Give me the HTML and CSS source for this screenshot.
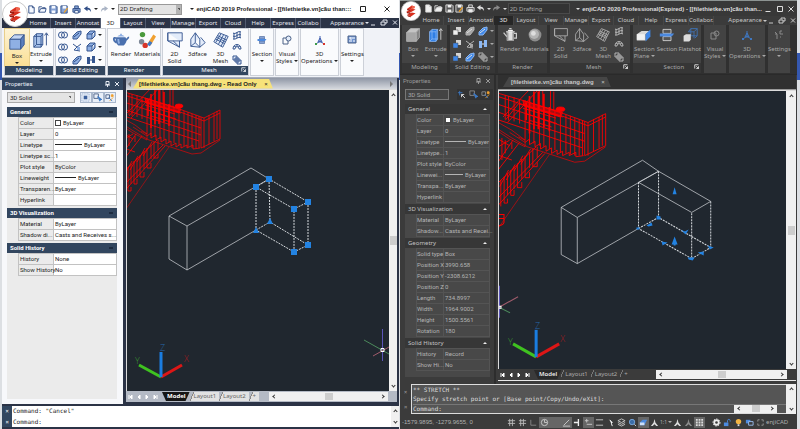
FILE: index.html
```
<!DOCTYPE html>
<html lang="en">
<head>
    <meta charset="UTF-8">
    <meta name="viewport" content="width=device-width, initial-scale=1.0">
    <title>enjiCAD 2019 / 2020</title>
    <link rel="stylesheet" href="styles.css">
</head>
<body>

    <!-- Shared icons -->
    <svg class="defs" aria-hidden="true">
        <symbol id="logo" viewBox="0 0 26 26">
            <circle cx="13" cy="13" r="12.5" fill="#fff" stroke="#c9c9c9"/>
            <path d="M8 10l6-4 4 1-6 4zM7 14l7-4 5 1-7 4zM8 18l6-3 5 1-6 4z" fill="#d8301f"/>
            <path d="M8 10l4 1v2l-4-1zM7 14l5 1v2l-4-1zM8 18l5 2v1l-4-1z" fill="#9c1a10"/>
            <path d="M14 6l4 1v2l-4 2z" fill="#f0644c"/>
        </symbol>
        <symbol id="new" viewBox="0 0 10 10"><path d="M2 1h4l2 2v6H2zM6 1v2h2" fill="var(--paper)" stroke="var(--line)"/></symbol>
        <symbol id="open" viewBox="0 0 10 10"><path d="M1 8V2h3l1 1h3v2" fill="none" stroke="var(--line)"/><path d="M1 8l2-4h6L8 8z" fill="var(--paper)" stroke="var(--line)"/></symbol>
        <symbol id="save" viewBox="0 0 10 10"><path d="M1 1h7l1 1v7H1z" fill="var(--mid)" stroke="var(--line)"/><path d="M3 1h4v3H3zM3 6h4v3H3z" fill="var(--paper)"/></symbol>
        <symbol id="saveas" viewBox="0 0 10 10"><path d="M1 1h7v8H1z" fill="var(--mid)" stroke="var(--line)"/><path d="M3 1h4v3H3z" fill="var(--paper)"/><path d="M4 8l4-5 1 1-4 5z" fill="#f0a020"/></symbol>
        <symbol id="print" viewBox="0 0 10 10"><path d="M3 1h4v3H3zM1 4h8v4H1z" fill="var(--mid)" stroke="var(--line)"/><path d="M3 6h4v3H3z" fill="var(--paper)" stroke="var(--line)"/></symbol>
        <symbol id="undo" viewBox="0 0 10 10"><path d="M1 4l4-3v2c3 0 4 2 4 5C8 6 7 5 5 5v2z" fill="var(--line)"/></symbol>
        <symbol id="redo" viewBox="0 0 10 10"><path d="M9 4L5 1v2C2 3 1 5 1 8c1-2 2-3 4-3v2z" fill="var(--off)"/></symbol>

        <symbol id="box" viewBox="0 0 20 20">
            <path d="M2 7l5-5h11l-4 5z" fill="var(--top)" stroke="var(--edge)"/>
            <path d="M14 7l4-5v11l-4 5z" fill="var(--side)" stroke="var(--edge)"/>
            <path d="M2 7h12v11H2z" fill="var(--front)" stroke="var(--edge)"/>
        </symbol>
        <symbol id="extrude" viewBox="0 0 20 20">
            <path d="M2 6l3-3h7v12l-2 3H2z" fill="var(--exfill)" stroke="var(--edge)"/>
            <path d="M2 6h8v12M10 6l2-3M5 3v12M2 18l3-3h7" fill="none" stroke="var(--edge)"/>
            <path d="M16 16V3M14 5l2-3 2 3" fill="none" stroke="var(--line)"/>
        </symbol>
        <symbol id="teapot" viewBox="0 0 20 20">
            <path d="M5 8c-4-2-4 3 0 5M15 10c2 0 2-3 4-3" fill="none" stroke="var(--pot)" stroke-width="2"/>
            <path d="M5 7h10c2 4 1 6-2 9H7c-3-3-4-5-2-9z" fill="var(--pot)"/>
            <path d="M6 6c2-2 6-2 8 0zM9 3h2v2H9z" fill="var(--pot2)"/>
            <path d="M7 9c0 2 0 3 1 5" stroke="var(--pot2)" stroke-width="2" fill="none"/>
        </symbol>
        <symbol id="kettle" viewBox="0 0 20 20">
            <path d="M6 6h9v11H6z" fill="#dedede"/><path d="M6 6h2v11H6zM13 6h2v11h-2z" fill="#9a9a9a"/>
            <path d="M5 6h11M8 4h5v1H8zM9 2h3" fill="#fff" stroke="#fff"/>
            <path d="M6 12L2 7M15 8h3v6h-3" fill="none" stroke="#ccc" stroke-width="1.500"/>
        </symbol>
        <symbol id="materials" viewBox="0 0 20 20">
            <circle cx="5" cy="4" r="3" fill="#4a9a3c"/><circle cx="4" cy="12" r="3" fill="#7d8897"/>
            <circle cx="8" cy="16" r="3" fill="#d8352a"/><path d="M10 15l7-11 3 2-6 10z" fill="#f0a030"/><path d="M10 15l3-4 3 2-3 4z" fill="#3c78c8"/>
        </symbol>
        <symbol id="ball" viewBox="0 0 20 20"><circle cx="10" cy="10" r="8" fill="#8d8d8d"/><circle cx="9" cy="9" r="6" fill="#b5b5b5"/><circle cx="8" cy="8" r="3" fill="#dedede"/></symbol>
        <symbol id="solid2d" viewBox="0 0 20 20"><path d="M2 2h16v9H2zM2 2v9l13 7V11M8 11l7 7" fill="var(--soft)" stroke="var(--edge)"/></symbol>
        <symbol id="face3d" viewBox="0 0 20 20"><path d="M2 9l5-7v11l-5 4zM7 2l5 7v9L7 13M2 17l10 1 6-5-5-6" fill="var(--soft)" stroke="var(--edge)"/></symbol>
        <symbol id="mesh3d" viewBox="0 0 20 20"><path d="M2 12L8 2l10 4-6 12zM5 7l10 5M7 15L13 4M4 9l10 5M6 5l10 5M4 13L10 3M10 17l6-12" fill="var(--soft)" stroke="var(--edge)"/></symbol>
        <symbol id="meshA" viewBox="0 0 10 10"><path d="M1 3c3 2 5-3 8-1M1 6c3 2 5-3 8-1M1 9c3 1 5-3 8-1M2 3v6M5 2v6M8 2v6" fill="none" stroke="var(--edge)"/></symbol>
        <symbol id="meshB" viewBox="0 0 10 10"><path d="M1 7c0-6 8-6 8 0M3 7c0-3 4-3 4 0M1 7h2M7 7h2M5 3v2M2 4l2 1M8 4L6 5" fill="none" stroke="var(--edge)"/></symbol>
        <symbol id="meshC" viewBox="0 0 10 10"><path d="M1 1h4v4H1zM3 3h4v4H3zM5 5h4v4H5z" fill="var(--soft)" stroke="var(--edge)"/></symbol>

        <symbol id="union" viewBox="0 0 10 10"><circle cx="3.500" cy="5" r="3" fill="none" stroke="var(--edge)"/><circle cx="6.500" cy="5" r="3" fill="none" stroke="var(--edge)"/></symbol>
        <symbol id="pair" viewBox="0 0 10 10"><path d="M4 1h5v5H4z" fill="#d5d5d5"/><path d="M1 4h5v5H1z" fill="var(--pairfill, #efefef)" stroke="#444" stroke-width=".5"/></symbol>
        <symbol id="slab" viewBox="0 0 10 10"><path d="M1 6l4-4 4-1v3L5 9H1z" fill="var(--front)" stroke="var(--edge)"/><path d="M2 7l5-4" stroke="var(--line)"/></symbol>
        <symbol id="cubelet" viewBox="0 0 10 10"><path d="M1 4h5v5H1zM1 4l3-3h5L6 4M9 1v5L6 9" fill="var(--front)" stroke="var(--edge)"/></symbol>
        <symbol id="slice" viewBox="0 0 10 10"><path d="M1 2l4 3-3 3 6 1M5 5l4-3" fill="none" stroke="var(--edge)"/><path d="M5 5h3v3H5z" fill="var(--front)"/></symbol>
        <symbol id="twin" viewBox="0 0 10 10"><path d="M1 2h3v7H1zM6 1h3v7H6z" fill="var(--edge)"/><path d="M4 5h2" stroke="var(--line)"/></symbol>

        <symbol id="section" viewBox="0 0 20 20"><path d="M5 3h10v5H5zM5 12h10v5H5z" fill="var(--mid)" stroke="var(--line)"/><path d="M1 8h18l-3 4H1z" fill="#4c8ae0"/></symbol>
        <symbol id="plane" viewBox="0 0 20 20"><path d="M1 9l6-4h10l-5 4v8H1z" fill="#d8d8d8"/><path d="M12 9l6-6v9l-6 6z" fill="#3f87e8"/><path d="M1 9h10v7H1z" fill="#f1f1f1"/></symbol>
        <symbol id="flatshot" viewBox="0 0 20 20"><path d="M8 6l3-4h8v9l-3 3M8 6h7v8M15 6l4-4M11 2v9h8" fill="none" stroke="#3f77c0"/><path d="M2 11l3-2h6v7l-2 2H2z" fill="#dcdcdc"/></symbol>
        <symbol id="visual" viewBox="0 0 10 10"><path d="M1 3h5v6H1z" fill="none" stroke="var(--sm)"/><circle cx="6.500" cy="3.500" r="2.500" fill="var(--soft)" stroke="var(--sm)"/></symbol>
        <symbol id="ops" viewBox="0 0 10 10"><path d="M5 1v5L1 9M5 6l4 3M3 7l2-4 2 4z" fill="none" stroke="var(--ops)"/><path d="M0 8h2v2H0z" fill="var(--opsgreen)"/><path d="M8 8h2v2H8z" fill="var(--opsred)"/></symbol>
        <symbol id="settings" viewBox="0 0 10 10"><path d="M1 1h8v7H1z" fill="#6f93d0" stroke="var(--sm)"/><path d="M2 3h2M5 3h3M2 6h3M6 6h2M4 2v3" stroke="#fff"/></symbol>
        <symbol id="tune" viewBox="0 0 10 10"><path d="M1 2l2 2v5M1 4h2M6 1h2M6 1v3h3M6 7h1" fill="none" stroke="#8a8a8a"/></symbol>
        <symbol id="pick" viewBox="0 0 10 10"><path d="M1 1h5v5H1z" fill="none" stroke="var(--sm)"/><path d="M5 4l4 3-2 0 1 2" fill="none" stroke="#3b79c6" stroke-width="1.500"/></symbol>
        <symbol id="plus" viewBox="0 0 10 10"><path d="M1 1h8v8H1z" fill="none" stroke="#8aa4cc" stroke-dasharray="1 1"/><path d="M3 3h4v4H3z" fill="#3b5f9c"/></symbol>
        <symbol id="addpick" viewBox="0 0 10 10"><path d="M3 1v5M1 3h5" stroke="#3b79c6"/><path d="M5 5l4 4M5 5h3M5 5v3" stroke="#ddd"/></symbol>
        <symbol id="quick" viewBox="0 0 10 10"><path d="M1 2h4v4H1z" fill="none" stroke="var(--sm)"/><path d="M5 9L9 5M7 2h2v2H7z" fill="#f0a030" stroke="#f0a030"/><path d="M4 5l4 4" stroke="#3b79c6"/></symbol>
        <symbol id="launch" viewBox="0 0 8 8"><path d="M1 6V1h5M3 3l3 3M6 3v3H3" fill="none" stroke="#fff"/></symbol>

        <!-- Status bar icons -->
        <symbol id="grid" viewBox="0 0 10 10"><path d="M3 1v8M6 1v8M1 3h8M1 6h8" stroke="#bbb" fill="none"/></symbol>
        <symbol id="ortho" viewBox="0 0 10 10"><path d="M2 2v6h6" stroke="#888" fill="none"/></symbol>
        <symbol id="track" viewBox="0 0 10 10"><path d="M3 1v4M1 3h4M3 7h6" stroke="#ccc" fill="none"/></symbol>
        <symbol id="polar" viewBox="0 0 10 10"><circle cx="5" cy="5" r="3.500" fill="none" stroke="#ccc"/><path d="M5 2v3h3" stroke="#ccc" fill="none"/></symbol>
        <symbol id="slash" viewBox="0 0 10 10"><path d="M1 9h8M2 8l6-6" stroke="#ccc"/></symbol>
        <symbol id="cross" viewBox="0 0 10 10"><path d="M6 1v8M1 5h5" stroke="#eee" stroke-width="1.500"/></symbol>
        <symbol id="lines" viewBox="0 0 10 10"><path d="M1 2h8M1 8h8" stroke="#ccc"/></symbol>
        <symbol id="arrow" viewBox="0 0 10 10"><path d="M4 2l3 3-1 1 1 3" fill="#fff" stroke="#fff"/></symbol>
        <symbol id="layers" viewBox="0 0 10 10"><path d="M1 3l4-2 4 2-4 2zM1 5l4 2 4-2M1 7l4 2 4-2" fill="none" stroke="#ccc"/></symbol>
        <symbol id="zoomer" viewBox="0 0 10 10"><circle cx="4.500" cy="4.500" r="3" fill="#3c6ea8" stroke="#7aa8dc"/><path d="M7 7l2 2" stroke="#ddd"/></symbol>
        <symbol id="sheet" viewBox="0 0 10 10"><path d="M1 5l3-3h5L6 8H1z" fill="#4c8ae0"/><path d="M1 5h5v3H1z" fill="#cfe0f8"/></symbol>
        <symbol id="person" viewBox="0 0 10 10"><path d="M5 1l1 4 3 4H7L5 7 3 9H1l3-4z" fill="#ddd"/></symbol>
        <symbol id="checker" viewBox="0 0 10 10"><path d="M1 2h8M1 5h8M1 8h8" stroke="#ddd" stroke-dasharray="2 1" stroke-width="2"/></symbol>
        <symbol id="gear" viewBox="0 0 10 10"><circle cx="5" cy="5" r="2.500" fill="none" stroke="#eee" stroke-width="2"/><circle cx="5" cy="5" r="4" fill="none" stroke="#eee" stroke-dasharray="1.500 1.500"/></symbol>
        <symbol id="lock" viewBox="0 0 10 10"><path d="M1 5h5v4H1z" fill="#4c8ae0"/><path d="M5 5V3c0-2 3-2 3 0v1" fill="none" stroke="#4c8ae0"/></symbol>
        <symbol id="bulb" viewBox="0 0 10 10"><circle cx="5" cy="4" r="3" fill="#f5b544"/><path d="M4 7h2v2H4z" fill="#ddd"/></symbol>
        <symbol id="screens" viewBox="0 0 10 10"><path d="M1 2h5v4H1z" fill="#4c8ae0"/><path d="M4 4h5v4H4z" fill="#3b3b3b" stroke="#9cc0f0"/></symbol>
        <symbol id="full" viewBox="0 0 10 10"><path d="M2 4V2h2M6 2h2v2M8 6v2H6M4 8H2V6" fill="none" stroke="#999"/></symbol>

        <!-- Staircase wireframe used in both drawings -->
        <symbol id="stairs" viewBox="116 84 110 140" overflow="visible">
            <g fill="none" stroke="#f00" stroke-width=".8">
                <path d="M120 91l24 7 37 12 22 8 16-8v29l-19 9M120 94l25 8 37 11 21 8 16-8M120 101l80 27M120 108l25 9 38 12 17 6M120 115l78 26"/>
                <path d="M128 93v22M131 94v22M136 95v22M141 97v22M146 98v36M150 100v36M154 101v36M159 103v36M163 104v36M168 106v36M173 107v36M178 109v36M183 111v35M187 112v35M191 114v34M195 115v33M198 116v32M200 117v31M203 118v30M208 115v29M213 113v28M216 111v28"/>
                <path d="M146 136l4-3v5l5-3v5l5-3v5l5-3v5l5-3v5l5-3v4l5-3v4l6-3v3l6-3v4l7-1"/>
                <path d="M159 86v18M162 86v18M169 88v19M172 90v17"/>
                <path d="M147 100v16M150 94v34M154 90v34M158 90v34M163 92v30M168 104v22" stroke-width="1.500"/>
                <path d="M126 113l28-29M130 118l32-34M128 116l12-15M140 101l40 12M144 105l30 9M147 110l28 9M150 116l20 6"/>
                <path d="M144 98l36 11-2 4-33-10z" fill="#f00" fill-opacity=".6"/>
                <ellipse cx="178" cy="106" rx="4" ry="2" fill="#f00"/>
                <path d="M120 117l14 8 12 9v6l-14-7-12-8M120 123l14 9 14 8 43 14 9-1 19-13M146 134l-6-3M132 127l14 9" stroke-width=".6"/>
                <path d="M120 132l12 7M120 147l14 5M120 141l12-7M120 156l15-22M120 163l21-27M121 135v20M125 132v20M128 134v12M134 136v6"/>
                <path d="M118 176l38-36M118 190l44-45M118 197l46-51"/>
                <path d="M121 173v20M124 170v24M127 167v24h3v-4M130 164v20M133 161v23h3v-5M136 158v20M139 155v22h4v-5M143 151v18M146 148v20h4v-5M150 145v14M153 142v16h4v-4M157 140v10"/>
                <path d="M123 176l8-15M129 170l8-14M136 162l8-14M142 156l9-14"/>
                <path d="M118 219l50-72" stroke-width=".5"/>
            </g>
        </symbol>
    </svg>

    <!-- enjiCAD 2019 -->
    <main class="window light">
        <header class="titlebar">
            <svg class="logo"><use href="#logo"/></svg>
            <div class="quick">
                <svg><use href="#new"/></svg>
                <svg><use href="#open"/></svg>
                <svg><use href="#save"/></svg>
                <svg><use href="#saveas"/></svg>
                <svg><use href="#print"/></svg>
                <svg><use href="#undo"/></svg>
                <span class="caret"></span>
                <svg><use href="#redo"/></svg>
                <span class="caret"></span>
            </div>
            <select class="workspace" aria-label="Workspace"><option>2D Drafting</option></select>
            <h1><span class="caret"></span> enjiCAD 2019 Professional - [[filethietke.vn]cầu than:::</h1>
            <button class="winbtn" aria-label="Maximize"><svg viewBox="0 0 8 8"><path d="M1.500 1.500h5v5h-5z"/></svg></button>
            <button class="winbtn" aria-label="Close"><svg viewBox="0 0 8 8"><path d="M1.500 1.500l5 5M6.500 1.500l-5 5"/></svg></button>
        </header>
        <nav class="tabs">
            <a href="#">Home</a><a href="#">Insert</a><a href="#">Annotat</a><a href="#" class="active">3D</a><a href="#">Layout</a><a href="#">View</a><a href="#">Manage</a><a href="#">Export</a><a href="#">Cloud</a><a href="#">Help</a><a href="#">Express</a><a href="#">Collabo</a>
            <button class="appearance">Appearance <span class="caret"></span></button>
            <svg class="mdi" viewBox="0 0 30 8"><path d="M2 6.500h4M12 3.500h4v3h-4zM14 3V1.500h4v3h-2M24 2l4 4M28 2l-4 4"/></svg>
        </nav>
        <div class="ribbon">
            <section class="panel modeling">
                <div class="tools">
                    <button class="tool on"><svg><use href="#box"/></svg>Box<span class="caret"></span></button>
                    <button class="tool"><svg><use href="#extrude"/></svg>Extrude<span class="caret"></span></button>
                </div>
                <h2>Modeling</h2>
            </section>
            <section class="panel editing">
                <div class="icons">
                    <svg><use href="#union"/></svg><svg><use href="#slab"/></svg><svg><use href="#cubelet"/></svg><span class="caret"></span>
                    <svg><use href="#union"/></svg><svg><use href="#slice"/></svg><svg><use href="#cubelet"/></svg><span class="caret"></span>
                    <svg><use href="#union"/></svg><svg><use href="#slab"/></svg><svg><use href="#twin"/></svg><span class="caret"></span>
                </div>
                <h2>Solid Editing</h2>
            </section>
            <section class="panel render">
                <div class="tools">
                    <button class="tool"><svg><use href="#teapot"/></svg>Render</button>
                    <button class="tool"><svg><use href="#materials"/></svg>Materials</button>
                </div>
                <h2>Render</h2>
            </section>
            <section class="panel mesh">
                <div class="tools">
                    <button class="tool"><svg><use href="#solid2d"/></svg>2D<br>Solid</button>
                    <button class="tool"><svg><use href="#face3d"/></svg>3dface</button>
                    <button class="tool"><svg><use href="#mesh3d"/></svg>3D<br>Mesh</button>
                    <div class="stack"><svg><use href="#meshA"/></svg><svg><use href="#meshB"/></svg><svg><use href="#meshC"/></svg></div>
                </div>
                <h2>Mesh <svg class="launch"><use href="#launch"/></svg></h2>
            </section>
            <section class="panel narrow"><button class="tool small"><svg><use href="#section"/></svg>Section<span class="caret"></span></button></section>
            <section class="panel narrow"><button class="tool small"><svg><use href="#visual"/></svg>Visual<br>Styles <span class="caret in"></span></button></section>
            <section class="panel wide"><button class="tool small"><svg><use href="#ops"/></svg>3D<br>Operations <span class="caret in"></span></button></section>
            <section class="panel narrow"><button class="tool small"><svg><use href="#settings"/></svg>Settings<span class="caret"></span></button></section>
        </div>

        <div class="workarea">
            <aside class="properties">
                <h2>Properties <span class="pins"><svg viewBox="0 0 16 8"><path d="M2 1.500h3v3H2zM1 5h5M3.500 5v2M11 2l4 4M15 2l-4 4"/></svg></span></h2>
                <div class="picker">
                    <select aria-label="Object"><option>3D Solid</option></select>
                    <button aria-label="Toggle pick"><svg><use href="#plus"/></svg></button>
                    <button aria-label="Select objects"><svg><use href="#pick"/></svg></button>
                    <button aria-label="Quick select"><svg><use href="#quick"/></svg></button>
                </div>
                <div class="sheet">
                    <h3>General</h3>
                    <table>
                        <tr><th>Color</th><td><span class="swatch"></span>ByLayer</td></tr>
                        <tr><th>Layer</th><td>0</td></tr>
                        <tr><th>Linetype</th><td><span class="rule long"></span>ByLayer</td></tr>
                        <tr><th>Linetype sc...</th><td>1</td></tr>
                        <tr class="locked"><th>Plot style</th><td>ByColor</td></tr>
                        <tr><th>Lineweight</th><td><span class="rule"></span>ByLayer</td></tr>
                        <tr><th>Transparen...</th><td>ByLayer</td></tr>
                        <tr><th>Hyperlink</th><td></td></tr>
                    </table>
                    <h3>3D Visualization</h3>
                    <table>
                        <tr><th>Material</th><td>ByLayer</td></tr>
                        <tr><th>Shadow di...</th><td>Casts and Receives s...</td></tr>
                    </table>
                    <h3>Solid History</h3>
                    <table>
                        <tr><th>History</th><td>None</td></tr>
                        <tr><th>Show History</th><td>No</td></tr>
                    </table>
                </div>
            </aside>
            <section class="document">
                <div class="files"><span class="prev"></span><a href="#">[filethietke.vn]cầu thang.dwg - Read Only <b>×</b></a><span class="next"></span></div>
                <div class="view">
                    <svg class="canvas" viewBox="126 90 262 301" preserveAspectRatio="xMinYMin slice">
                        <use href="#stairs" x="116" y="84" width="110" height="140"/>
                        <g class="wire">
                            <path d="M168 216l18 10v44l-18-11zM168 216l82-48 18 11-82 47M186 270l69-40"/>
                            <path class="dash" d="M255 187l13-8 39 23-14 7zM255 187v43l38 22v-43M307 202v43l-14 7M268 179l1 43 38 23M255 230l14-8"/>
                        </g>
                        <path class="grips" d="M252 184h6v6h-6zM265 176h6v6h-6zM290 206h6v6h-6zM304 199h6v6h-6zM290 249h6v6h-6zM304 242h6v6h-6zM252 233l3-6 3 6zM266 224l3-6 3 6z"/>
                        <g class="ucs">
                            <path class="x" d="M160 377l21-12"/><path class="y" d="M160 377l-22-12"/><path class="z" d="M160 377v-25"/>
                            <text class="x" x="183" y="362">X</text><text class="y" x="134" y="364">Y</text><text class="z" x="159" y="351">Z</text>
                        </g>
                        <g class="cursor">
                            <path stroke="#5b55b8" d="M381.500 329v32"/><path stroke="#4c8a5c" d="M363 340l25 14"/><path stroke="#a05c6c" d="M372 356l16-9"/>
                            <path stroke="#fff" d="M380 348.500h3v3h-3z"/>
                        </g>
                    </svg>
                    <div class="vscroll"><i class="up"></i><span></span><i class="down"></i></div>
                </div>
                <div class="sheets">
                    <svg class="steps" viewBox="0 0 36 8"><path d="M3 2v4M6 2v4l-2-2zM14 2v4l-2-2zM20 2v4l2-2zM28 2v4l2-2zM31 2v4"/></svg>
                    <a href="#" class="active">Model</a><a href="#">Layout1</a><a href="#">Layout2</a><a href="#">+</a>
                    <div class="hscroll"><i class="left"></i><span></span><i class="right"></i></div>
                </div>
            </section>
        </div>

        <footer class="command">
            <div class="grip"><span>×</span><span>¤</span></div>
            <div class="console">
                <p>Command: "Cancel"</p>
                <label>Command: <input type="text" aria-label="Command"></label>
            </div>
            <div class="vscroll"><i class="up"></i><i class="down"></i></div>
        </footer>
    </main>

    <!-- enjiCAD 2020 -->
    <main class="window dark">
        <header class="titlebar">
            <svg class="logo"><use href="#logo"/></svg>
            <div class="quick">
                <svg><use href="#new"/></svg>
                <svg><use href="#open"/></svg>
                <svg><use href="#save"/></svg>
                <svg><use href="#saveas"/></svg>
                <svg><use href="#print"/></svg>
                <svg><use href="#undo"/></svg>
                <span class="caret"></span>
                <svg><use href="#redo"/></svg>
                <span class="caret"></span>
            </div>
            <select class="workspace" aria-label="Workspace"><option>2D Drafting</option></select>
            <h1><span class="caret"></span> enjiCAD 2020 Professional(Expired) - [[filethietke.vn]cầu than...</h1>
            <button class="winbtn" aria-label="Minimize"><svg viewBox="0 0 8 8"><path d="M1.500 6.500h5"/></svg></button>
            <button class="winbtn" aria-label="Maximize"><svg viewBox="0 0 8 8"><path d="M1.500 1.500h5v5h-5z"/></svg></button>
            <button class="winbtn" aria-label="Close"><svg viewBox="0 0 8 8"><path d="M1.500 1.500l5 5M6.500 1.500l-5 5"/></svg></button>
        </header>
        <nav class="tabs">
            <a href="#">Home</a><a href="#">Insert</a><a href="#">Annotati</a><a href="#" class="active">3D</a><a href="#">Layout</a><a href="#">View</a><a href="#">Manage</a><a href="#">Export</a><a href="#">Cloud</a><a href="#">Help</a><a href="#">Express</a><a href="#">Collabor.</a>
            <button class="appearance">Appearance <span class="caret"></span></button>
            <svg class="mdi" viewBox="0 0 30 8"><path d="M2 6.500h4M12 3.500h4v3h-4zM14 3V1.500h4v3h-2M24 2l4 4M28 2l-4 4"/></svg>
        </nav>
        <div class="ribbon">
            <section class="panel modeling">
                <div class="tools">
                    <button class="tool"><svg><use href="#box"/></svg>Box<span class="caret"></span></button>
                    <button class="tool"><svg class="blue"><use href="#extrude"/></svg>Extrude<span class="caret"></span></button>
                </div>
                <h2>Modeling</h2>
            </section>
            <section class="panel editing">
                <div class="icons">
                    <svg><use href="#pair"/></svg><svg><use href="#slab"/></svg><svg class="blue"><use href="#slab"/></svg><span class="caret"></span>
                    <svg class="blue"><use href="#pair"/></svg><svg><use href="#slice"/></svg><svg class="blue"><use href="#twin"/></svg><span class="caret"></span>
                    <svg class="blue"><use href="#pair"/></svg><svg class="blue"><use href="#slab"/></svg><svg><use href="#meshC"/></svg><span class="caret"></span>
                </div>
                <h2>Solid Editing</h2>
            </section>
            <section class="panel render">
                <div class="tools">
                    <button class="tool"><svg><use href="#kettle"/></svg>Render</button>
                    <button class="tool"><svg><use href="#ball"/></svg>Materials</button>
                </div>
                <h2>Render</h2>
            </section>
            <section class="panel mesh">
                <div class="tools">
                    <button class="tool"><svg><use href="#solid2d"/></svg>2D<br>Solid</button>
                    <button class="tool"><svg><use href="#face3d"/></svg>3dface</button>
                    <button class="tool"><svg><use href="#mesh3d"/></svg>3D<br>Mesh</button>
                    <div class="stack"><svg><use href="#meshA"/></svg><svg><use href="#meshB"/></svg><svg><use href="#meshC"/></svg></div>
                </div>
                <h2>Mesh <svg class="launch"><use href="#launch"/></svg></h2>
            </section>
            <section class="panel sections">
                <div class="tools">
                    <button class="tool"><svg><use href="#plane"/></svg>Section<br>Plane <span class="caret in"></span></button>
                    <button class="tool"><svg><use href="#section"/></svg>Section</button>
                    <button class="tool"><svg><use href="#flatshot"/></svg>Flatshot</button>
                </div>
                <h2>Section <svg class="launch"><use href="#launch"/></svg></h2>
            </section>
            <section class="panel narrow"><button class="tool small"><svg><use href="#visual"/></svg>Visual<br>Styles <span class="caret in"></span></button></section>
            <section class="panel wide"><button class="tool small"><svg><use href="#ops"/></svg>3D<br>Operations <span class="caret in"></span></button></section>
            <section class="panel narrow"><button class="tool small"><svg><use href="#tune"/></svg>Settings<span class="caret"></span></button></section>
        </div>

        <div class="workarea">
            <aside class="properties">
                <h2>Properties <span class="pins"><svg viewBox="0 0 16 8"><path d="M2 1.500h3v3H2zM1 5h5M3.500 5v2M11 2l4 4M15 2l-4 4"/></svg></span></h2>
                <div class="picker">
                    <select aria-label="Object"><option>3D Solid</option></select>
                    <button aria-label="Toggle pick"><svg><use href="#addpick"/></svg></button>
                    <button aria-label="Select objects"><svg><use href="#pick"/></svg></button>
                    <button aria-label="Quick select"><svg><use href="#quick"/></svg></button>
                </div>
                <div class="sheet">
                    <h3>General</h3>
                    <table>
                        <tr><th>Color</th><td><span class="swatch"></span>ByLayer</td></tr>
                        <tr><th>Layer</th><td>0</td></tr>
                        <tr><th>Linetype</th><td><span class="rule"></span>ByLayer</td></tr>
                        <tr><th>Linetype...</th><td>1</td></tr>
                        <tr><th>Plot style</th><td>ByColor</td></tr>
                        <tr><th>Linewei...</th><td><span class="rule short"></span>ByLayer</td></tr>
                        <tr><th>Transpa...</th><td>ByLayer</td></tr>
                        <tr><th>Hyperlink</th><td></td></tr>
                    </table>
                    <h3>3D Visualization</h3>
                    <table>
                        <tr><th>Material</th><td>ByLayer</td></tr>
                        <tr><th>Shadow...</th><td>Casts and Recei...</td></tr>
                    </table>
                    <h3>Geometry</h3>
                    <table>
                        <tr><th>Solid type</th><td>Box</td></tr>
                        <tr><th>Position X</th><td>3990.658</td></tr>
                        <tr><th>Position Y</th><td>-2308.6212</td></tr>
                        <tr><th>Position Z</th><td>0</td></tr>
                        <tr><th>Length</th><td>734.8997</td></tr>
                        <tr><th>Width</th><td>1964.9002</td></tr>
                        <tr><th>Height</th><td>1500.5561</td></tr>
                        <tr><th>Rotation</th><td>180</td></tr>
                    </table>
                    <h3>Solid History</h3>
                    <table>
                        <tr><th>History</th><td>Record</td></tr>
                        <tr><th>Show Hi...</th><td>No</td></tr>
                    </table>
                </div>
            </aside>
            <section class="document">
                <div class="files"><a href="#">[filethietke.vn]cầu thang.dwg <b>×</b></a></div>
                <div class="view">
                    <svg class="canvas" viewBox="500 90 286 281" preserveAspectRatio="xMinYMin slice">
                        <use href="#stairs" x="493" y="84" width="121" height="154"/>
                        <path fill="none" stroke="#f00" d="M500 213h5v8c-1 3-3 3-5 3M500 217h5"/>
                        <g class="wire">
                            <path d="M562 206l16 10v46l-16-9zM562 206l81-47 16 11-81 46M578 262l61-35M639 181l20-11 52 30-19 11-53-30"/>
                            <path class="dash" d="M639 181v46l53 30v-46M711 200v46l-19 11M659 170v46l52 30M639 227l20-11"/>
                        </g>
                        <path class="grips" d="M675 186l2 7h-4zM674 243h-2l3-8 3 8h-2v1h-2zM647 224l5-3 1 3-4 1zM657 214l4 1v3h-4zM681 228l4 2 4-2-3 5zM637 226h3v2h-3zM662 240l6 1-5 3zM688 256h7l-2 3-4-1zM698 251l6-1v4zM708 244l6 2-4 2z"/>
                        <g class="ucs">
                            <path class="x" d="M537 355l23-13"/><path class="y" d="M537 355l-23-13"/><path class="z" d="M537 355v-27"/>
                            <text class="x" x="561" y="340">X</text><text class="y" x="509" y="343">Y</text><text class="z" x="536" y="327">Z</text>
                        </g>
                        <g class="cursor">
                            <path stroke="#5b55b8" d="M500.500 284v32"/><path stroke="#4c8a5c" d="M501 306l10 5"/><path stroke="#a05c6c" d="M501 305l18-10"/>
                            <path stroke="#fff" d="M500 304.500h2v2h-2z"/>
                        </g>
                    </svg>
                    <div class="vscroll"><i class="up"></i><span></span><i class="down"></i></div>
                </div>
                <div class="sheets">
                    <svg class="steps" viewBox="0 0 36 8"><path d="M3 2v4M6 2v4l-2-2zM14 2v4l-2-2zM20 2v4l2-2zM28 2v4l2-2zM31 2v4"/></svg>
                    <a href="#" class="active">Model</a><a href="#">Layout1</a><a href="#">Layout2</a><a href="#">+</a>
                    <div class="hscroll"><i class="left"></i><span></span><i class="right"></i></div>
                </div>
            </section>
        </div>

        <footer class="command">
            <div class="grip"><span>×</span><span>¤</span></div>
            <div class="console">
                <p>** STRETCH **</p>
                <p>Specify stretch point or [Base point/Copy/Undo/eXit]:</p>
                <div class="entry">
                    <label>Command: <input type="text" aria-label="Command"></label>
                    <div class="hscroll"><i class="left"></i><span></span><i class="right"></i></div>
                </div>
            </div>
            <div class="vscroll"><i class="up"></i><i class="down"></i></div>
        </footer>
        <div class="status">
            <span class="coords">-1579.9895, -1279.9655, 0</span>
            <svg><use href="#grid"/></svg><svg><use href="#grid"/></svg><svg><use href="#ortho"/></svg><svg class="on"><use href="#polar"/></svg><svg class="on"></svg><svg class="on"><use href="#slash"/></svg><svg><use href="#cross"/></svg><svg class="on"><use href="#track"/></svg><svg><use href="#lines"/></svg>
            <svg><use href="#arrow"/></svg><svg><use href="#layers"/></svg><svg><use href="#zoomer"/></svg><svg class="on"><use href="#sheet"/></svg><svg><use href="#person"/></svg>
            <span class="scale">1:1 <span class="caret in"></span></span>
            <svg><use href="#person"/></svg><svg class="off"><use href="#person"/></svg><svg class="on"><use href="#checker"/></svg>
            <svg class="gap"><use href="#gear"/></svg><svg><use href="#lock"/></svg><svg><use href="#bulb"/></svg><svg><use href="#screens"/></svg><svg><use href="#full"/></svg>
            <span class="brand">enjiCAD</span>
        </div>
    </main>

</body>
</html>
```
FILE: styles.css
```
* {
    box-sizing: border-box;
}
body {
    margin: 0;
    padding: 0 3px 0 2px;
    min-height: 100vh;
    display: grid;
    grid-template-columns: 1fr 1fr;
    gap: 1px;
    font: 6px/8px "Noto Sans", sans-serif;
    background: linear-gradient(#dcdfe3 53px, #3558b0 53px, #3558b0 80px, #dcdfe3 80px);
}
h1, h2, h3, p {
    margin: 0;
    font-size: 6px;
    line-height: 8px;
    font-weight: normal;
}
a {
    color: inherit;
    text-decoration: none;
}
button, select, input {
    font: inherit;
    color: inherit;
    margin: 0;
    padding: 0;
    border: 0;
    border-radius: 0;
    background: none;
    appearance: none;
    min-width: 0;
}
svg {
    display: block;
    flex: none;
}
.defs {
    position: absolute;
    width: 0;
    height: 0;
}
.window {
    display: flex;
    flex-direction: column;
    min-width: 0;
    height: 100vh;
    overflow: hidden;
    position: relative;
}
.light {
    --line: #2f4d86;
    --paper: #f6f9ff;
    --mid: #86a2d4;
    --off: #a9b3c4;
    --top: #c3d5f3;
    --side: #5c7fbd;
    --front: #8fb0e4;
    --exfill: #a9c3ec;
    --edge: #34558f;
    --soft: #e3ecfa;
    --pot: #4a70ae;
    --pot2: #8fb0e4;
    --sm: #4c6288;
    --ops: #3d5cae;
    --opsred: #d8352a;
    --opsgreen: #3a9a48;
    background: #fff;
    color: #222;
}
.dark {
    --line: #e0e0e0;
    --paper: #f0f0f0;
    --mid: #555;
    --off: #8a8a8a;
    --top: #c4c4c4;
    --side: #838383;
    --front: #a6a6a6;
    --exfill: #2f7fe6;
    --edge: #b4b4b4;
    --soft: none;
    --pot: #b8b8b8;
    --pot2: #ececec;
    --sm: #8a8a8a;
    --ops: #3f77c0;
    --opsred: #3f77c0;
    --opsgreen: #3f77c0;
    background: #383838;
    color: #a8a8a8;
}
.dark .blue {
    --front: #3f87e8;
    --edge: #8cb8f4;
    --pairfill: #3f87e8;
}
.caret {
    display: block;
    width: 0;
    height: 0;
    border: 2px solid transparent;
    border-top-color: currentColor;
    border-bottom: 0;
}
.caret.in {
    display: inline-block;
    vertical-align: 1px;
}

/* Title bar */
.titlebar {
    display: flex;
    align-items: center;
    height: 18px;
    padding-left: 25px;
}
.dark .titlebar {
    height: 16px;
    padding-left: 24px;
    color: #ddd;
    border-top: 1px solid #8d9493;
}
.logo {
    position: absolute;
    left: 0;
    top: 1px;
    width: 26px;
    height: 26px;
}
.dark .logo {
    left: 1px;
    width: 20px;
    height: 20px;
}
.quick {
    display: flex;
    align-items: center;
    justify-content: space-between;
    width: 89px;
}
.quick svg {
    width: 9px;
    height: 9px;
}
.dark .quick {
    width: 86px;
}
.workspace {
    width: 65px;
    height: 11px;
    margin: 0 8px 0 3px;
    padding-left: 1px;
    border: 1px solid #999;
    background: linear-gradient(45deg, transparent 60%, #555 0) right 1px center / 3px 3px no-repeat, linear-gradient(90deg, transparent 57px, #b5b5b5 57px), #e3e3e3;
}
.dark .workspace {
    margin: 0 6px 0 1px;
    border-color: #4a4a4a;
    background: #333;
    color: #aaa;
}
.titlebar h1 {
    display: flex;
    align-items: center;
    gap: 2px;
    flex: 1;
    white-space: nowrap;
    font-family: "Liberation Sans", sans-serif;
    font-weight: bold;
}
.winbtn {
    width: 24px;
    height: 14px;
    padding: 0 8px;
}
.dark .winbtn {
    width: 12px;
    padding: 0 2px;
}
.winbtn svg {
    width: 8px;
    height: 8px;
}
.winbtn path, .mdi path, .pins path {
    fill: none;
    stroke: currentColor;
    stroke-width: 1;
}

/* Ribbon tabs */
.tabs {
    display: flex;
    height: 10px;
    padding-left: 24px;
    line-height: 10px;
    background: #2b3346;
    color: #e4e7ee;
}
.dark .tabs {
    height: 9px;
    padding-left: 19px;
    line-height: 9px;
    background: #3b3b3b;
    color: #c9c9c9;
}
.tabs a {
    width: 25px;
    text-align: center;
    border-right: 1px solid #525b70;
}
.dark .tabs a {
    border-right-color: #464646;
}
.tabs a.active {
    width: 20px;
    color: #222;
    background: #fff;
}
.dark .tabs a.active {
    color: #eee;
    background: #272727;
}
.tabs .appearance {
    display: flex;
    align-items: center;
    gap: 1px;
    margin-left: auto;
}
.mdi {
    width: 30px;
    height: 9px;
}

/* Ribbon */
.ribbon {
    display: flex;
    gap: 1px;
    height: 50px;
    padding: 0 2px 1px;
    background: #f0f2f7;
    border-bottom: 1px solid #a7adba;
}
.dark .ribbon {
    gap: 3px;
    background: #303030;
    border-bottom-color: #2a2a2a;
}
.panel {
    display: flex;
    flex-direction: column;
    background: #fafbfd;
    border: 1px solid #ccd0d8;
    min-width: 0;
}
.dark .panel {
    background: #434343;
    border: 0;
}
.panel h2 {
    display: flex;
    justify-content: center;
    height: 9px;
    margin-top: auto;
    color: #fff;
    background: #32465f;
}
.dark .panel h2 {
    height: 10px;
    color: #a8a8a8;
    background: #363636;
}
.launch {
    width: 6px;
    height: 6px;
    margin: 1px 1px 0 auto;
}
.panel h2:has(.launch) {
    padding-left: 45%;
}
.modeling { width: 50px; }
.editing { width: 51px; }
.render { width: 54px; }
.mesh { width: 87px; }
.narrow { width: 24px; }
.wide { width: 39px; }
.dark .modeling { width: 45px; }
.dark .editing { width: 45px; }
.dark .render { width: 49px; }
.dark .mesh { width: 80px; }
.dark .sections { width: 68px; }
.dark .narrow { width: 22px; }
.dark .wide { width: 36px; }
.tools {
    display: flex;
    align-items: flex-start;
    flex: 1;
}
.tool {
    flex: 1;
    padding-top: 2px;
    line-height: 7px;
    white-space: nowrap;
    text-align: center;
}
.tool.on {
    align-self: stretch;
    background: linear-gradient(#fdf3d5, #fbdf94);
    outline: 1px solid #e8cf8c;
}
.tool svg {
    width: 18px;
    height: 18px;
    margin: 0 auto 2px;
}
.dark .tool svg {
    width: 16px;
    height: 16px;
    margin-bottom: 3px;
}
.tool.small {
    flex: none;
}
.tool.small svg {
    width: 10px;
    height: 10px;
    margin: 4px auto 6px;
}
.dark .tool.small svg {
    margin: 3px auto 6px;
}
.tool > .caret:not(.in) {
    margin: 2px auto 0;
}
.stack {
    display: flex;
    flex-direction: column;
    align-self: stretch;
    justify-content: space-around;
    width: 16px;
}
.stack svg {
    width: 10px;
    height: 10px;
}
.icons {
    display: grid;
    grid-template-columns: 14px 14px 13px 6px;
    align-items: center;
    justify-items: center;
    flex: 1;
}
.dark .icons {
    grid-template-columns: 13px 13px 13px 6px;
}
.icons svg {
    width: 10px;
    height: 10px;
}

/* Properties palette */
.workarea {
    display: flex;
    flex: 1;
    min-height: 0;
    background: #2b3346;
}
.dark .workarea {
    background: #3b3b3b;
}
.properties {
    display: flex;
    flex-direction: column;
    width: 121px;
    font-family: Roboto, sans-serif;
    background: #f7f8fb;
}
.dark .properties {
    width: 96px;
    background: #3b3b3b;
    border-right: 2px solid #2d2d2d;
}
.properties h2 {
    display: flex;
    justify-content: space-between;
    padding: 2px 2px 2px 3px;
    background: #32465f;
    color: #e6ebf3;
}
.dark .properties h2 {
    color: #999;
    background: #3b3b3b;
}
.pins svg {
    width: 18px;
    height: 8px;
}
.picker {
    display: flex;
    padding: 2px 7px 4px 5px;
}
.dark .picker {
    padding: 2px 1px 4px 5px;
}
.picker select {
    width: 68px;
    height: 11px;
    margin-right: auto;
    padding-left: 2px;
    border: 1px solid #aaa;
    background: linear-gradient(45deg, transparent 60%, #666 0) right 3px center / 3px 3px no-repeat, #e4e4e4;
}
.picker button {
    width: 12px;
    height: 11px;
    border: 1px solid #a9b7cc;
    background: #e9eff8;
}
.picker button svg {
    width: 9px;
    height: 9px;
}
.dark .picker select {
    width: 44px;
    border-color: #777;
    background: #444;
}
.dark .picker button {
    border: 0;
    background: #333;
}
.sheet {
    flex: 1;
    margin: 0 6px 5px 5px;
    background: #ebebeb;
}
.dark .sheet {
    margin: 0 4px 7px 5px;
    background: #484848;
}
.sheet h3 {
    height: 10px;
    padding-left: 3px;
    line-height: 10px;
    font-weight: bold;
    color: #fff;
    background: #32465f linear-gradient(#1d2b40, #1d2b40) right 4px center / 4px 2px no-repeat;
}
.dark .sheet h3 {
    font-family: "Noto Sans", sans-serif;
    font-weight: normal;
    color: #c2c2c2;
    background: #373737;
}
.dark .sheet h3::after {
    content: "";
    float: right;
    margin: 4px 3px;
    border: 2px solid transparent;
    border-top: 0;
    border-bottom-color: #eee;
}
.sheet table {
    width: calc(100% - 11px);
    margin: 0 0 2px 11px;
    border-collapse: collapse;
    table-layout: fixed;
}
.dark .sheet table {
    margin-bottom: 1px;
}
.sheet th, .sheet td {
    height: 11px;
    padding: 0 0 0 1px;
    text-align: left;
    font-weight: normal;
    white-space: nowrap;
    border: 1px solid #c2c2c2;
}
.sheet th {
    width: 35px;
    background: #ebebeb;
}
.sheet td {
    background: #fff;
}
.sheet .locked td {
    background: #ebebeb;
}
.dark .sheet th, .dark .sheet td {
    border-color: #545454;
    background: #484848;
    color: #b4b4b4;
}
.dark .sheet th {
    width: 27px;
    padding: 0;
}
.swatch {
    display: inline-block;
    width: 6px;
    height: 6px;
    margin-right: 2px;
    vertical-align: -1px;
    border: 1px solid #444;
    background: #fff;
}
.rule {
    display: inline-block;
    width: 21px;
    height: 1px;
    margin-right: 2px;
    vertical-align: 2px;
    background: currentColor;
}
.rule.long {
    width: 27px;
}
.rule.short {
    width: 18px;
}

/* Drawing */
.document {
    display: flex;
    flex-direction: column;
    flex: 1;
    min-width: 0;
    margin: 0 2px 2px 3px;
    background: #b4bac5;
}
.dark .document {
    margin: 0 1px 3px 2px;
    background: #3b3b3b;
    border-bottom: 1px solid #e8e8e8;
}
.files {
    display: flex;
    align-items: center;
    height: 11px;
    background: linear-gradient(#8f96a5, #d5d8de);
}
.dark .files {
    height: 15px;
    background: #303030;
    border-bottom: 1px solid #999;
}
.files a {
    margin-left: 2px;
    padding: 0 5px 0 6px;
    line-height: 10px;
    font-family: "Liberation Sans", sans-serif;
    font-weight: bold;
    color: #222;
    background: #f6e27a;
    clip-path: polygon(0 100%, 6px 0, calc(100% - 4px) 0, 100% 100%);
}
.files b {
    margin-left: 6px;
    font-weight: normal;
}
.dark .files a {
    margin-left: 5px;
    padding: 0 6px 0 8px;
    color: #c8c8c8;
    background: #464646;
}
.prev, .next {
    margin-left: 2px;
    border: 3px solid transparent;
    border-right-color: #777;
    border-left: 0;
}
.next {
    margin: 0 4px 0 auto;
    border: 3px solid transparent;
    border-left-color: #777;
    border-right: 0;
}
.view {
    display: flex;
    flex: 1;
    min-height: 0;
    border: 1px solid #dcdcdc;
    border-width: 1px 0 0 1px;
}
.canvas {
    flex: 1;
    min-width: 0;
    height: 100%;
    background: #20272f;
}
.wire {
    fill: none;
    stroke: #d5d9dd;
    stroke-width: .7;
}
.dash {
    stroke-dasharray: 2 1;
    stroke-width: 1;
}
.grips {
    fill: #2383e2;
}
.ucs path {
    fill: none;
    stroke-width: 3;
}
.ucs path.x { stroke: #dc1616; }
.ucs path.y { stroke: #3fc220; }
.ucs path.z { stroke: #1a7de0; }
.ucs text {
    font: 9px "Open Sans", sans-serif;
    font-weight: 300;
}
.ucs text.x { fill: #a61c20; }
.ucs text.y { fill: #3a9030; }
.ucs text.z { fill: #2767ad; }
.cursor path {
    fill: none;
    stroke-width: 1;
}
.vscroll {
    display: flex;
    flex-direction: column;
    align-items: center;
    justify-content: space-between;
    width: 8px;
    padding: 4px 0;
    background: #f0f0f0;
}
.dark .vscroll {
    width: 10px;
}
.vscroll span {
    width: 7px;
    height: 9px;
    background: #cdcdcd;
}
.vscroll i, .hscroll i {
    width: 3px;
    height: 3px;
    border: solid #333;
    border-width: 1px 0 0 1px;
}
.up { transform: rotate(45deg); }
.down { transform: rotate(225deg); }
.left { transform: rotate(-45deg); }
.right { transform: rotate(135deg); }
.hscroll {
    display: flex;
    align-items: center;
    justify-content: space-between;
    width: 119px;
    height: 9px;
    margin: 0 9px 0 auto;
    padding: 0 4px;
    background: #f0f0f0;
}
.dark .hscroll {
    width: 131px;
}
.hscroll span {
    width: 8px;
    height: 7px;
    background: #cdcdcd;
}
.sheets {
    display: flex;
    align-items: center;
    height: 11px;
}
.steps {
    width: 36px;
    height: 8px;
}
.steps path {
    fill: #fff;
    stroke: #fff;
    stroke-width: 1;
}
.sheets a {
    padding: 0 3px 0 4px;
    line-height: 9px;
    color: #666;
    background: linear-gradient(112deg, transparent 3px, #888 3px, #888 4px, #e2e2e2 4px);
}
.sheets a.active {
    padding: 0 4px 0 5px;
    font-weight: bold;
    color: #fff;
    background: #161616;
    clip-path: polygon(0 0, 100% 0, calc(100% - 4px) 100%, 4px 100%);
}
.dark .sheets a {
    color: #aaa;
    background: linear-gradient(112deg, transparent 2px, #777 2px, #777 3px, #3b3b3b 3px);
}
.dark .sheets a.active {
    font-weight: 600;
    color: #eee;
    background: #2a2a2a;
}

/* Command line */
.command {
    display: flex;
    height: 25px;
    padding: 2px 0;
    font-family: "DejaVu Sans Mono", monospace;
    background: #2b3346;
}
.dark .command {
    height: 31px;
    padding: 0 1px 1px 0;
    background: #3b3b3b;
}
.grip {
    display: flex;
    flex-direction: column;
    justify-content: space-around;
    width: 10px;
    text-align: center;
    color: #fff;
    background: #32465f;
}
.dark .grip {
    width: 11px;
    color: #999;
    background: #3b3b3b;
}
.console {
    display: flex;
    flex-direction: column;
    justify-content: space-around;
    flex: 1;
    min-width: 0;
    padding-left: 1px;
    white-space: nowrap;
    background: #fff;
}
.dark .console {
    border: 1px solid #ddd;
    border-right: 0;
    background: #555;
    color: #ddd;
}
.console label {
    display: flex;
    flex: none;
    gap: 4px;
    height: 8px;
}
.console input {
    width: 60px;
    height: 8px;
}
.entry {
    display: flex;
    border-top: 1px solid #777;
}
.dark .entry .hscroll {
    width: 43px;
    margin-right: 9px;
    height: 8px;
}

/* Status bar */
.status {
    display: flex;
    align-items: center;
    height: 14px;
    padding-left: 2px;
    background: #3b3b3b;
    color: #b0b0b0;
}
.coords {
    margin-right: auto;
    font-family: "Liberation Sans", sans-serif;
}
.status svg {
    width: 11px;
    height: 11px;
    padding: 1px;
}
.status .on {
    background: #666;
}
.status .off {
    opacity: .5;
}
.status .gap {
    width: 17px;
    padding-left: 7px;
}
.scale {
    width: 12px;
    white-space: nowrap;
    font-size: 5px;
}
.brand {
    width: 31px;
}
```
